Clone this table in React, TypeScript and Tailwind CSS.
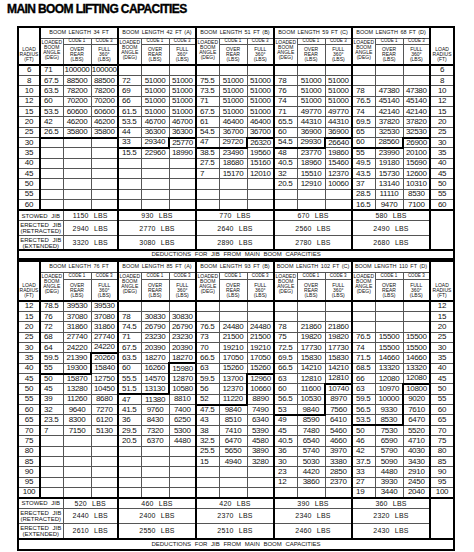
import React from "react";

type Group = { title: string; data: string[]; jib: [string, string, string]; c3: number; c1: number };

const TOP_R = ["6", "8", "10", "12", "15", "20", "25", "30", "35", "40", "45", "50", "55", "60"];
const BOT_R = ["12", "15", "20", "25", "30", "35", "40", "45", "50", "55", "60", "65", "70", "75", "80", "85", "90", "95", "100"];

const TOP: Group[] = [
  {
    title: "BOOM LENGTH 34 FT",
    data: ["71 100000 100000", "67.5 88500 88500", "63.5 78200 78200", "60 70200 70200", "53.5 60600 60600", "42 46200 46200", "26.5 35800 35800"],
    jib: ["1150", "2940", "3320"],
    c3: 7,
    c1: 6,
  },
  {
    title: "BOOM LENGTH 42 FT (A)",
    data: ["", "72 51000 51000", "69 51000 51000", "66 51000 51000", "61.5 51000 51000", "53.5 46700 46700", "44 36300 36300", "33 29340 25770", "15.5 22960 18990"],
    jib: ["930", "2770", "3080"],
    c3: 7,
    c1: 7,
  },
  {
    title: "BOOM LENGTH 51 FT (B)",
    data: ["", "75.5 51000 51000", "73.5 51000 51000", "71 51000 51000", "67.5 51000 51000", "61 46400 46400", "54.5 36700 36700", "47 29720 26320", "38.5 23490 19560", "27.5 18680 15160", "7 15170 12010"],
    jib: ["770", "2640", "2890"],
    c3: 7,
    c1: 7,
  },
  {
    title: "BOOM LENGTH 59 FT (C)",
    data: ["", "78 51000 51000", "76 51000 51000", "74 51000 51000", "71 49770 49770", "65.5 44310 44310", "60 36900 36900", "54.5 29930 26640", "48 23770 19860", "40.5 18960 15460", "32 15510 12370", "20.5 12910 10060"],
    jib: ["670", "2560", "2780"],
    c3: 7,
    c1: 7,
  },
  {
    title: "BOOM LENGTH 68 FT (D)",
    data: ["", "", "78 47380 47380", "76.5 45140 45140", "74 42140 42140", "69.5 37820 37820", "65 32530 32530", "60 28560 26900", "55 23990 20100", "49.5 19180 15690", "43.5 15730 12600", "37 13140 10310", "28.5 11110 8530", "16.5 9470 7100"],
    jib: ["580", "2490", "2680"],
    c3: 7,
    c1: 7,
  },
];

const BOT: Group[] = [
  {
    title: "BOOM LENGTH 76 FT",
    data: ["78.5 39530 39530", "76 37080 37080", "72 31860 31860", "68 27740 27740", "64 24220 24220", "59.5 21390 20260", "55 19300 15840", "50 15870 12750", "45 13280 10450", "39 11260 8680", "32 9640 7270", "23.5 8300 6120", "7 7150 5130"],
    jib: ["520", "2440", "2610"],
    c3: 5,
    c1: 6,
  },
  {
    title: "BOOM LENGTH 85 FT (A)",
    data: ["", "78 30830 30830", "74.5 26790 26790", "71 23230 23230", "67.5 20390 20390", "63.5 18270 18270", "60 16260 15980", "55.5 14570 12870", "51.5 13130 10580", "47 11380 8810", "41.5 9760 7400", "36 8430 6250", "29.5 7320 5300", "20.5 6370 4480"],
    jib: ["460", "2400", "2550"],
    c3: 6,
    c1: 8,
  },
  {
    title: "BOOM LENGTH 93 FT (B)",
    data: ["", "", "76.5 24480 24480", "73 21500 21500", "70 19210 19210", "66.5 17050 17050", "63 15260 15260", "59.5 13700 12960", "56 12370 10660", "52 11220 8890", "47.5 9840 7490", "43 8510 6340", "38 7410 5390", "32.5 6470 4580", "25.5 5650 3890", "15 4940 3280"],
    jib: ["420", "2370", "2510"],
    c3: 7,
    c1: 9,
  },
  {
    title: "BOOM LENGTH 102 FT (C)",
    data: ["", "", "78 21860 21860", "75 19820 19820", "72.5 17730 17730", "69.5 15830 15830", "66.5 14210 14210", "63 12810 12810", "60 11600 10740", "56.5 10530 8970", "53 9840 7560", "49 8590 6410", "45 7480 5460", "40.5 6540 4660", "36 5740 3970", "30 5030 3380", "23 4420 2850", "12 3860 2370"],
    jib: ["390", "2340", "2460"],
    c3: 8,
    c1: 10,
  },
  {
    title: "BOOM LENGTH 110 FT (D)",
    data: ["", "", "", "76.5 15500 15500", "74 15500 15500", "71.5 14660 14660", "68.5 13320 13320", "66 12080 12080", "63 10970 10800", "59.5 10000 9020", "56.5 9330 7610", "53.5 8530 6470", "50 7530 5520", "46 6590 4710", "42 5790 4030", "37.5 5090 3430", "33 4480 2910", "27 3930 2450", "19 3440 2040"],
    jib: ["360", "2320", "2430"],
    c3: 8,
    c1: 11,
  },
];

const BASE = "border border-[#555] p-0 leading-none";

function dataCls(sub: number, ri: number, g: Group): string {
  const c: string[] = [BASE];
  if (sub === 0) c.push("border-l-2 border-l-black text-left pl-[3px]");
  else c.push("text-center");
  if (sub === 2 && ri === g.c3) c.push("border-t-2 border-t-black");
  if (sub === 2 && ri >= g.c3 && ri <= g.c1) c.push("border-l-2 border-l-black");
  if (sub < 2 && ri === g.c1) c.push("border-b-2 border-b-black");
  return c.join(" ");
}

type Props = {
  radii: string[];
  groups: Group[];
  h: { head: string; code: string; sub: string; stow: string; ret: string; ext: string; ded: string };
};

function CapTable({ radii, groups, h }: Props) {
  const radHead = `${BASE} border-b-2 border-b-black align-bottom text-center pb-[2px] text-[5px] leading-[5.2px] whitespace-nowrap`;
  return (
    <table className="table-fixed border-collapse border-2 border-black w-[436px] text-[#111]">
      <colgroup>
        <col className="w-[22px]" />
        {groups.map((g, i) => (
          <React.Fragment key={i}>
            <col className="w-[23px]" />
            <col className="w-[28px]" />
            <col className="w-[27px]" />
          </React.Fragment>
        ))}
        <col className="w-[24px]" />
      </colgroup>
      <tbody>
        <tr className={h.head}>
          <td rowSpan={3} className={`${radHead} border-r-2 border-r-black`}>
            LOAD
            <br />
            RADIUS
            <br />
            (FT)
          </td>
          {groups.map((g, i) => (
            <td
              key={i}
              colSpan={3}
              className={`${BASE} border-l-2 border-l-black text-center text-[5.5px] whitespace-nowrap [word-spacing:1px]`}
            >
              {g.title}
            </td>
          ))}
          <td rowSpan={3} className={`${radHead} border-l-2 border-l-black`}>
            LOAD
            <br />
            RADIUS
            <br />
            (FT)
          </td>
        </tr>
        <tr className={h.code}>
          {groups.map((g, i) => (
            <React.Fragment key={i}>
              <td
                rowSpan={2}
                className={`${BASE} border-l-2 border-l-black border-b-2 border-b-black align-top text-center text-[5px] leading-[5.6px] pt-[1px] whitespace-nowrap`}
              >
                LOADED
                <br />
                BOOM
                <br />
                ANGLE
                <br />
                (DEG)
              </td>
              <td className={`${BASE} text-center text-[4.5px] leading-[5px] whitespace-nowrap`}>CODE 1</td>
              <td className={`${BASE} text-center text-[4.5px] leading-[5px] whitespace-nowrap`}>CODE 3</td>
            </React.Fragment>
          ))}
        </tr>
        <tr className={h.sub}>
          {groups.map((g, i) => (
            <React.Fragment key={i}>
              <td className={`${BASE} border-b-2 border-b-black align-bottom text-center pb-[2px] text-[5px] leading-[5.2px]`}>
                OVER
                <br />
                REAR
                <br />
                (LBS)
              </td>
              <td className={`${BASE} border-b-2 border-b-black align-bottom text-center pb-[2px] text-[5px] leading-[5.2px]`}>
                FULL
                <br />
                360°
                <br />
                (LBS)
              </td>
            </React.Fragment>
          ))}
        </tr>
        {radii.map((r, ri) => (
          <tr key={r} className="h-[10.36px] text-[8px] tracking-[-0.3px]">
            <td className={`${BASE} border-r-2 border-r-black text-center`}>{r}</td>
            {groups.map((g, gi) => {
              const row = g.data[ri] ? g.data[ri].split(" ") : ["", "", ""];
              return (
                <React.Fragment key={gi}>
                  {row.map((v, sub) => (
                    <td key={sub} className={dataCls(sub, ri, g)}>
                      {v}
                    </td>
                  ))}
                </React.Fragment>
              );
            })}
            <td className={`${BASE} border-l-2 border-l-black text-center`}>{r}</td>
          </tr>
        ))}
        <tr className={h.stow}>
          <td colSpan={2} className={`${BASE} border-t-2 border-t-black text-center text-[6px] whitespace-nowrap [word-spacing:2px]`}>
            STOWED JIB
          </td>
          {groups.map((g, i) => (
            <td
              key={i}
              colSpan={i === 0 ? 2 : 3}
              className={`${BASE} border-t-2 border-t-black ${i === 0 ? "" : "border-l-2 border-l-black"} text-center text-[7px] tracking-[0.2px] [word-spacing:3px]`}
            >
              {g.jib[0]} LBS
            </td>
          ))}
          <td rowSpan={3} className={`${BASE} border-t-2 border-t-black border-l-2 border-l-black`}></td>
        </tr>
        <tr className={h.ret}>
          <td colSpan={2} className={`${BASE} text-center text-[6px] leading-[6.2px] whitespace-nowrap [word-spacing:2px]`}>
            ERECTED JIB
            <br />
            (RETRACTED)
          </td>
          {groups.map((g, i) => (
            <td
              key={i}
              colSpan={i === 0 ? 2 : 3}
              className={`${BASE} ${i === 0 ? "" : "border-l-2 border-l-black"} text-center text-[7px] tracking-[0.2px] [word-spacing:3px]`}
            >
              {g.jib[1]} LBS
            </td>
          ))}
        </tr>
        <tr className={h.ext}>
          <td colSpan={2} className={`${BASE} text-center text-[6px] leading-[6.2px] whitespace-nowrap [word-spacing:2px]`}>
            ERECTED JIB
            <br />
            (EXTENDED)
          </td>
          {groups.map((g, i) => (
            <td
              key={i}
              colSpan={i === 0 ? 2 : 3}
              className={`${BASE} ${i === 0 ? "" : "border-l-2 border-l-black"} text-center text-[7px] tracking-[0.2px] [word-spacing:3px]`}
            >
              {g.jib[2]} LBS
            </td>
          ))}
        </tr>
        <tr className={h.ded}>
          <td colSpan={17} className={`${BASE} border-t-2 border-t-black text-center text-[6px] [word-spacing:2px]`}>
            DEDUCTIONS FOR JIB FROM MAIN BOOM CAPACITIES
          </td>
        </tr>
      </tbody>
    </table>
  );
}

export default function App() {
  return (
    <div className="w-[474px] h-[552px] bg-white font-['Liberation_Sans',Arial,sans-serif] text-black overflow-hidden">
      <div className="pl-[7px] pt-[3px] h-[26px] text-[12px] leading-none font-bold tracking-[-0.6px] [-webkit-text-stroke:0.35px_black]">
        MAIN BOOM LIFTING CAPACITIES
      </div>
      <div className="pl-[17px] flex flex-col">
        <CapTable
          radii={TOP_R}
          groups={TOP}
          h={{ head: "h-[11px]", code: "h-[6px]", sub: "h-[21px]", stow: "h-[10.5px]", ret: "h-[15px]", ext: "h-[14.5px]", ded: "h-[8.5px]" }}
        />
        <CapTable
          radii={BOT_R}
          groups={BOT}
          h={{ head: "h-[12px]", code: "h-[7px]", sub: "h-[21.5px]", stow: "h-[10.5px]", ret: "h-[15px]", ext: "h-[15.5px]", ded: "h-[11px]" }}
        />
      </div>
    </div>
  );
}
